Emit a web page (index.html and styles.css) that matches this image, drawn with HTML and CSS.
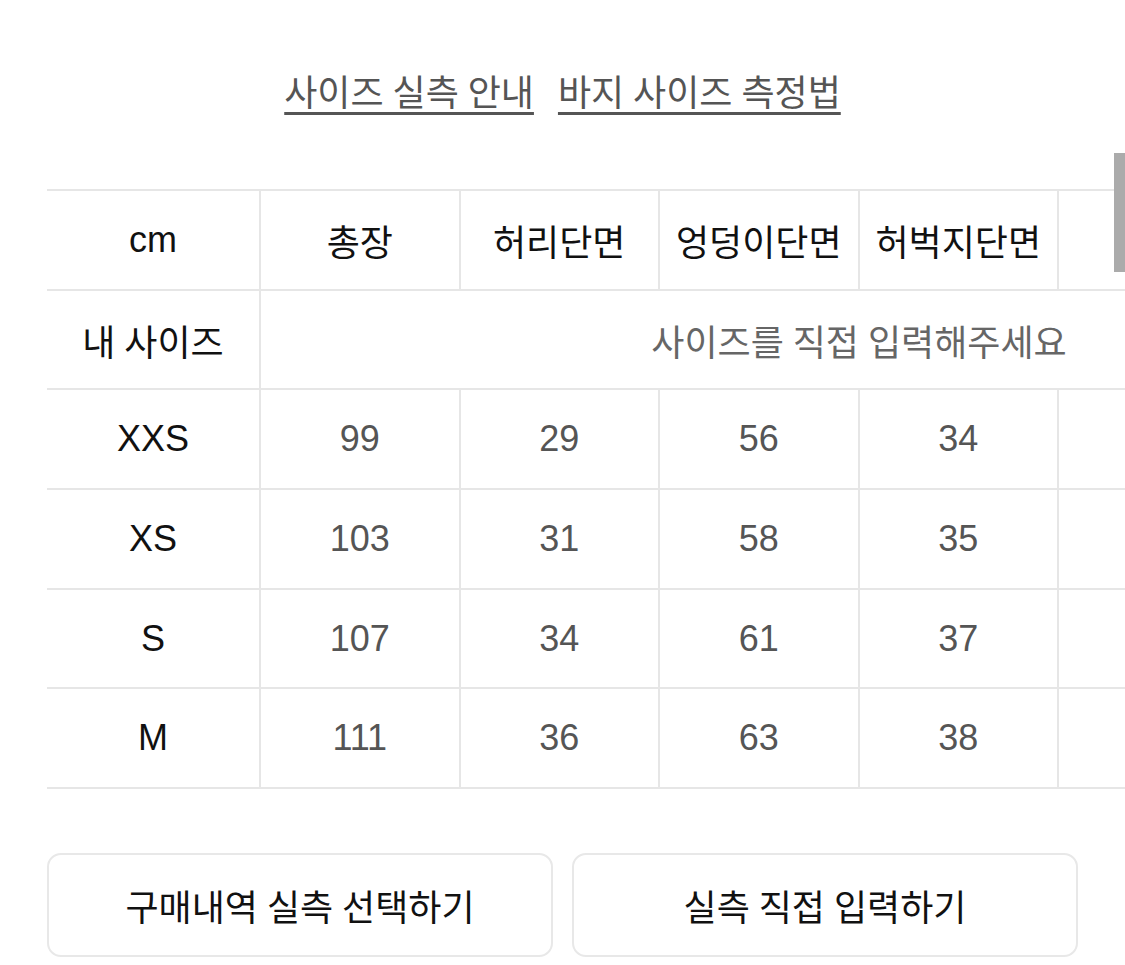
FILE: index.html
```html
<!DOCTYPE html>
<html lang="ko">
<head>
<meta charset="utf-8">
<link rel="stylesheet" href="styles.css">
</head>
<body>
<div class="page">
  <nav class="links">
    <a class="link" href="#">사이즈 실측 안내</a>
    <a class="link" href="#">바지 사이즈 측정법</a>
  </nav>
  <div class="table-wrap">
    <table class="size-table">
      <colgroup>
        <col class="c-first">
        <col class="c-val"><col class="c-val"><col class="c-val"><col class="c-val"><col class="c-val"><col class="c-val">
      </colgroup>
      <tr class="head">
        <th class="latin">cm</th><th>총장</th><th>허리단면</th><th>엉덩이단면</th><th>허벅지단면</th><th></th><th></th>
      </tr>
      <tr class="mine">
        <th>내 사이즈</th>
        <td colspan="6" class="placeholder">사이즈를 직접 입력해주세요</td>
      </tr>
      <tr class="latin"><th>XXS</th><td>99</td><td>29</td><td>56</td><td>34</td><td></td><td></td></tr>
      <tr class="latin"><th>XS</th><td>103</td><td>31</td><td>58</td><td>35</td><td></td><td></td></tr>
      <tr class="latin"><th>S</th><td>107</td><td>34</td><td>61</td><td>37</td><td></td><td></td></tr>
      <tr class="latin"><th>M</th><td>111</td><td>36</td><td>63</td><td>38</td><td></td><td></td></tr>
    </table>
  </div>
  <div class="buttons">
    <button class="btn">구매내역 실측 선택하기</button>
    <button class="btn">실측 직접 입력하기</button>
  </div>
</div>
<div class="scroll-thumb"></div>
</body>
</html>
```
FILE: styles.css
```css
html, body {
  margin: 0;
  padding: 0;
  background: #fff;
  overflow: hidden;
}
body {
  width: 1125px;
  height: 965px;
  font-family: Roboto, "Noto Sans CJK KR", sans-serif;
  color: #111;
}
.page {
  padding: 0 0 0 47px;
}
.links {
  display: flex;
  justify-content: center;
  gap: 24px;
  padding: 70px 47px 0 0;
  height: 120px;
  box-sizing: border-box;
}
.link {
  color: #555;
  font-size: 36px;
  line-height: 48px;
  text-decoration: underline;
  text-decoration-thickness: 3px;
  text-underline-offset: 6px;
  text-decoration-color: #555;
}
.table-wrap {
  margin-top: 69px;
  overflow: hidden;
  width: 1078px;
}
.size-table {
  border-collapse: collapse;
  table-layout: fixed;
  width: 1410px;
}
.c-first { width: 213px; }
.c-val { width: 199.5px; }
.size-table th, .size-table td {
  height: 97.7px;
  padding: 0;
  text-align: center;
  vertical-align: middle;
  font-size: 36px;
  font-weight: 400;
  border-top: 2px solid #e6e6e6;
  border-bottom: 2px solid #e6e6e6;
  border-left: 2px solid #e6e6e6;
}
.size-table tr > :first-child { border-left: none; }
.size-table th { color: #111; }
.size-table td { color: #555; }
.size-table td.placeholder { color: #666; }
.size-table .latin,
.size-table .latin th,
.size-table .latin td {
  font-family: "Liberation Sans", "Noto Sans CJK KR", sans-serif;
}
.buttons {
  display: flex;
  gap: 19px;
  margin-top: 64px;
  padding-right: 47px;
}
.btn {
  flex: 1;
  height: 104px;
  background: #fff;
  border: 2px solid #e8e8e8;
  border-radius: 14px;
  font-family: Roboto, "Noto Sans CJK KR", sans-serif;
  font-size: 36px;
  color: #111;
}
.scroll-thumb {
  position: absolute;
  left: 1114px;
  top: 153px;
  width: 11px;
  height: 119px;
  background: #ababab;
}
```
